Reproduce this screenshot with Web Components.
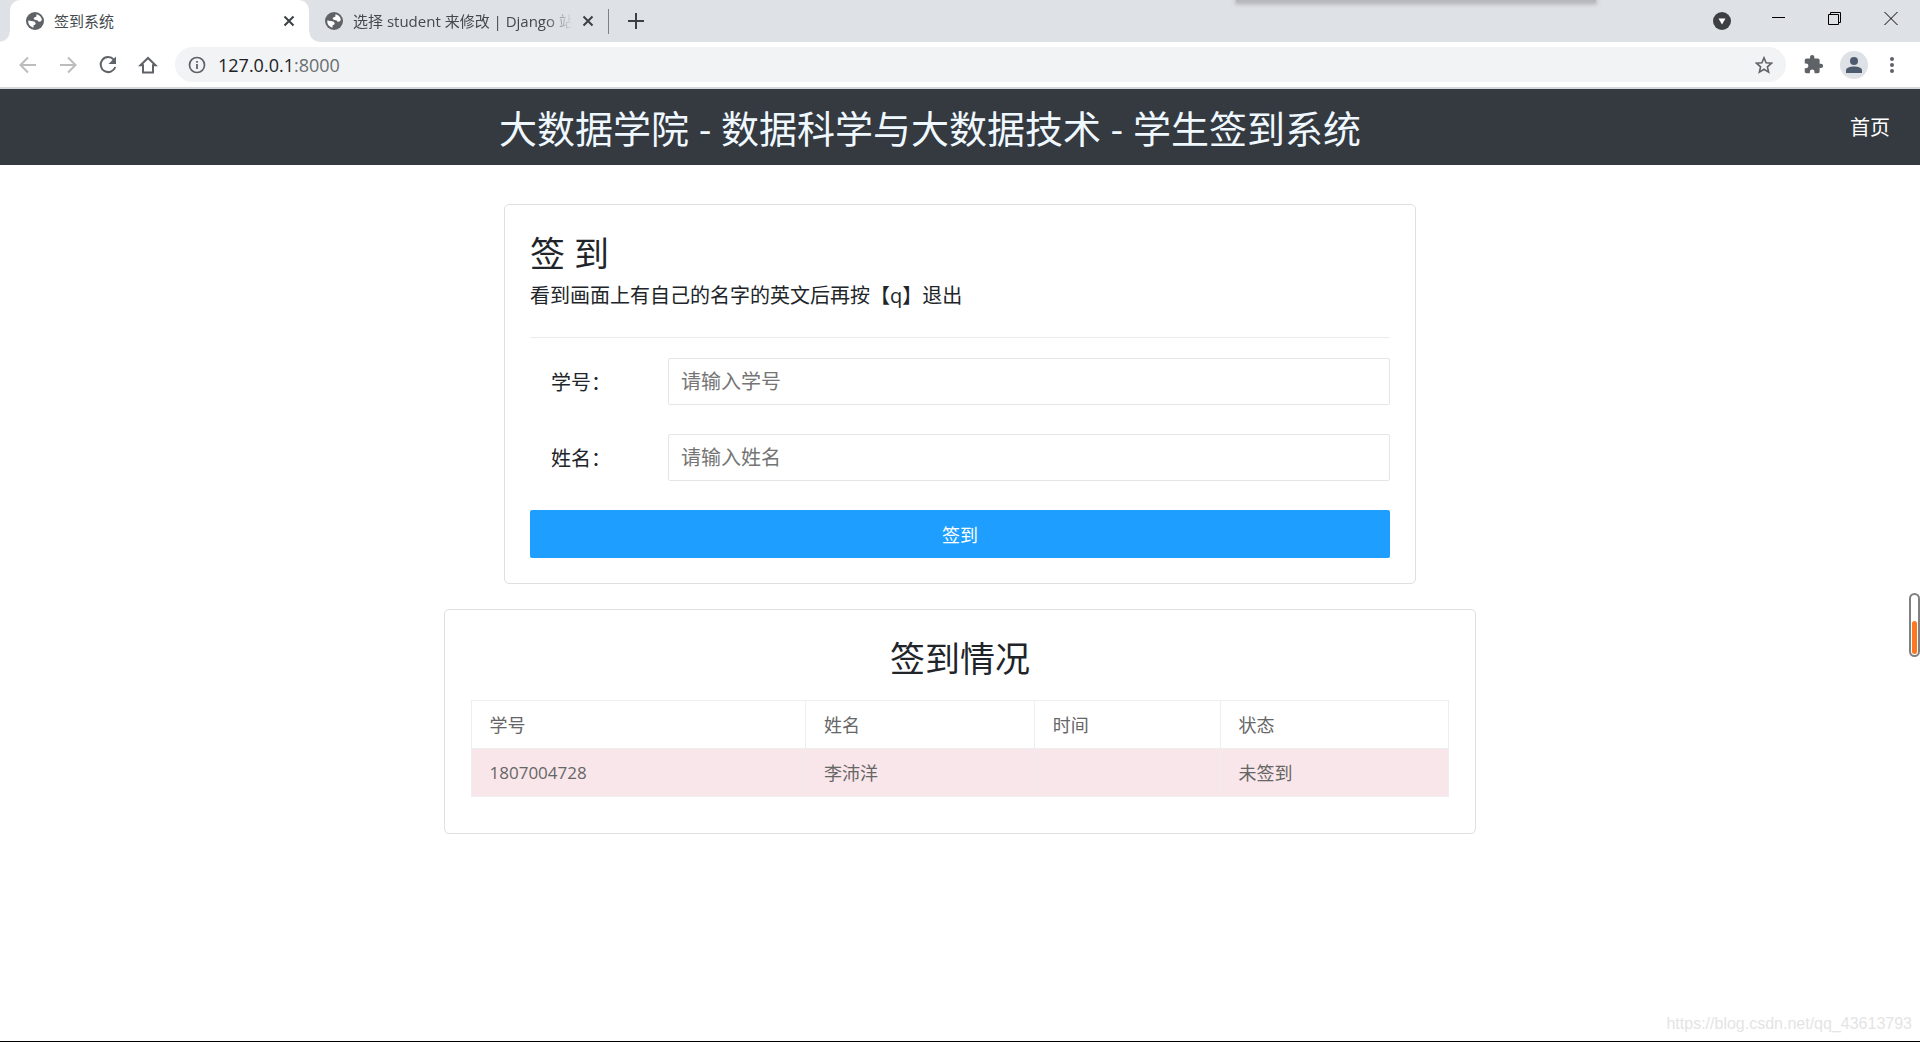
<!DOCTYPE html>
<html lang="zh-CN">
<head>
<meta charset="utf-8">
<title>签到系统</title>
<style>
html,body{height:100%}
body{margin:0;background:#fff;font-family:"Open Sans","Noto Sans CJK SC",sans-serif;color:#212529}
</style>
</head>
<body>
<browser-window></browser-window>
<script>
const define=(name,html,after)=>customElements.define(name,class extends HTMLElement{
  constructor(){
    super();
    const t=document.createElement('template');
    t.innerHTML='<style>*{box-sizing:border-box}button{font:inherit;border:0;background:none;padding:0;margin:0}svg{display:block}</style>'+html;
    this.attachShadow({mode:'open'}).append(t.content.cloneNode(true));
  }
  connectedCallback(){after&&after.call(this,this.shadowRoot)}
});

define('globe-icon',`<style>:host{display:block;width:18px;height:18px;flex:none}</style>
<svg width="18" height="18" viewBox="0 0 18 18"><circle cx="9" cy="9" r="9" fill="#5f6368"/><path d="M10.500 2.200C13.500 2.700 15.600 5 15.900 8L14.500 9.600 12.500 9.800 11.800 8.400 8.600 7.800 7.600 6.400 8.600 5.200 10.300 4.800ZM2.200 8.600 5.400 9 8.400 9.600 9.800 11.200 9 12.800 7.600 13.200 7.400 15.700A7 7 0 0 1 2.200 8.600Z" fill="#fff"/></svg>`);

define('browser-tab',`<style>
:host{display:flex;align-items:center;height:42px;padding:0 14px 0 16px;gap:10px;font-size:15px;line-height:20px;color:#45494d;min-width:0;flex:0 1 299px;position:relative}
:host([active]){background:#fff;border-radius:10px 10px 0 0}
:host([active])::before,:host([active])::after{content:"";position:absolute;bottom:0;width:10px;height:10px}
:host([active])::before{right:100%;background:radial-gradient(circle at 0 0,transparent 9px,#fff 10px)}
:host([active])::after{left:100%;background:radial-gradient(circle at 100% 0,transparent 9px,#fff 10px)}
.name{flex:1;min-width:0;white-space:nowrap;overflow:hidden}
:host([fade]) .name{-webkit-mask-image:linear-gradient(90deg,#000 88%,transparent);mask-image:linear-gradient(90deg,#000 88%,transparent)}
</style><globe-icon></globe-icon><span class="name"><slot></slot></span>
<button aria-label="关闭标签页"><svg width="12" height="12" viewBox="0 0 12 12"><path d="M1.500 1.500 10.500 10.500M10.500 1.500 1.500 10.500" stroke="#3c4043" stroke-width="2" fill="none"/></svg></button>`);

define('tab-strip',`<style>
:host{display:flex;align-items:center;height:42px;background:#dee1e6;padding-left:10px;position:relative}
.sep{width:1px;height:25px;background:#7d8185}
.new{margin-left:19px}
.shade{position:absolute;left:64.400%;width:18.700%;top:0;height:2px;background:#b5b8bd;box-shadow:0 1px 4px 1px #a6a9ae}
.win{margin-left:auto;display:flex;align-items:center;gap:41px;padding-right:22px}
</style>
<browser-tab active>签到系统</browser-tab><browser-tab fade>选择 student 来修改 | Django 站点管理员</browser-tab><i class="sep"></i>
<button class="new" aria-label="新标签页"><svg width="16" height="16" viewBox="0 0 16 16"><path d="M8 0V16M0 8H16" stroke="#3c4043" stroke-width="2"/></svg></button>
<i class="shade"></i>
<div class="win">
<button aria-label="搜索标签页"><svg width="18" height="42" viewBox="0 0 18 42"><circle cx="9" cy="21" r="9" fill="#3c4043"/><path d="M5.500 18.500H12.500L9 24.500Z" fill="#fff"/></svg></button>
<button aria-label="最小化"><svg width="14" height="42" viewBox="0 0 14 42"><path d="M0 17.500H13" stroke="#000"/></svg></button>
<button aria-label="还原"><svg width="16" height="42" viewBox="0 0 16 42"><path d="M1.500 14.500H11.500V24.500H1.500ZM3.500 14V12.500H13.500V22.500H12" fill="none" stroke="#000"/></svg></button>
<button aria-label="关闭"><svg width="14" height="42" viewBox="0 0 14 42"><path d="M.5 12 13.500 25M13.500 12 .5 25" stroke="#000" fill="none"/></svg></button>
</div>`);

define('address-bar',`<style>
:host{display:flex;align-items:center;height:45px;padding:0 20px 0 18px;background:#fff}
.nav{display:flex;gap:20px;margin-right:17px}
label{flex:1;min-width:0;height:35px;border-radius:18px;background:#f1f3f4;display:flex;align-items:center;padding:0 13px;font-size:18px;line-height:24px;color:#202124}
.url{flex:1;margin-left:12px}
.port{color:#6a6e72}
.tools{display:flex;align-items:center;gap:16px;margin-left:17px}
</style>
<div class="nav">
<button aria-label="后退"><svg width="20" height="20" viewBox="0 0 20 20"><path d="M18 10H3M10 2.500 2.500 10 10 17.500" fill="none" stroke="#babcbe" stroke-width="2"/></svg></button>
<button aria-label="前进"><svg width="20" height="20" viewBox="0 0 20 20"><path d="M2 10H17M10 2.500 17.500 10 10 17.500" fill="none" stroke="#babcbe" stroke-width="2"/></svg></button>
<button aria-label="重新加载"><svg width="20" height="20" viewBox="0 0 20 20"><path d="M15.800 4.600A7.500 7.500 0 1 0 17.300 12" fill="none" stroke="#5f6368" stroke-width="2"/><path d="M18 1.500V9H10.500Z" fill="#5f6368"/></svg></button>
<button aria-label="主页"><svg width="20" height="20" viewBox="0 0 20 20"><path d="M2.500 10.300 10 3 17.500 10.300H15V17.500H5V10.300Z" fill="none" stroke="#5f6368" stroke-width="2"/></svg></button>
</div>
<label><svg width="18" height="18" viewBox="0 0 18 18"><circle cx="9" cy="9" r="7.500" fill="none" stroke="#5f6368" stroke-width="1.700"/><path d="M9 8V13M9 5V6.800" stroke="#5f6368" stroke-width="1.800"/></svg>
<span class="url">127.0.0.1<span class="port">:8000</span></span>
<svg width="18" height="18" viewBox="0 0 18 18"><path d="M9 1.800 11.100 6.700 16.500 7.200 12.400 10.800 13.600 16.100 9 13.300 4.400 16.100 5.600 10.800 1.500 7.200 6.900 6.700Z" fill="none" stroke="#5f6368" stroke-width="1.600"/></svg></label>
<div class="tools">
<button aria-label="扩展程序"><svg width="21" height="21" viewBox="0 0 24 24"><path d="M20.500 11H19V7c0-1.100-.9-2-2-2h-4V3.500a2.500 2.500 0 0 0-5 0V5H4c-1.100 0-2 .9-2 2v3.800h1.500a2.700 2.700 0 0 1 0 5.400H2V20c0 1.100.9 2 2 2h3.800v-1.500a2.700 2.700 0 0 1 5.400 0V22H17c1.100 0 2-.9 2-2v-4h1.500a2.500 2.500 0 0 0 0-5z" fill="#5f6368"/></svg></button>
<button aria-label="个人资料"><svg width="28" height="28" viewBox="0 0 28 28"><circle cx="14" cy="14" r="14" fill="#dee1e6"/><circle cx="14" cy="10" r="4" fill="#4d5b6e"/><path d="M6 22V19.500C6 16.500 10 15.500 14 15.500S22 16.500 22 19.500V22Z" fill="#4d5b6e"/></svg></button>
<button aria-label="菜单"><svg width="16" height="20" viewBox="0 0 16 20"><g fill="#5f6368"><circle cx="8" cy="4" r="2"/><circle cx="8" cy="10" r="2"/><circle cx="8" cy="16" r="2"/></g></svg></button>
</div>`);

define('site-header',`<style>
:host{display:grid;grid-template-columns:1fr auto 1fr;align-items:center;height:76px;background:#343a40;padding:2px 30px 0}
h1{grid-column:2;margin:0 60px 0 0;font-size:38px;font-weight:400;line-height:48px;color:#f0f8ff;white-space:nowrap}
a{grid-column:3;justify-self:end;color:#fff;text-decoration:none;font-size:20px;line-height:30px}
</style><h1><slot></slot></h1><a href="#">首页</a>`);

define('panel-card',`<style>
:host{display:block;border:1px solid #dfdfdf;border-radius:5px;background:#fff;padding:26px 25px 25px}
</style><slot></slot>`);

define('form-row',`<style>
:host{display:flex;margin-bottom:29px;font-size:20px}
label{width:138px;padding:10px 0 7px 21px;line-height:30px;color:#212529}
input{flex:1;min-width:0;height:47px;border:1px solid #e6e6e6;border-radius:2px;padding:0 12px;font:inherit;background:#fff}
input::placeholder{color:#757575;opacity:1}
</style><label for="f"></label><input id="f" type="text">`,function(r){
  r.querySelector('label').textContent=this.getAttribute('label');
  r.querySelector('input').placeholder=this.getAttribute('hint');
});

define('sign-form',`<style>
:host{display:block}
h2{margin:0;font-size:35px;font-weight:400;line-height:46px}
p{margin:0;font-size:20px;line-height:38px}
hr{border:0;border-top:1px solid #ebebeb;margin:22px 0 20px}
form{margin:0}
.go{display:block;width:100%;height:48px;border-radius:2px;background:#1e9fff;color:#fff;font-size:18px}
</style><h2>签 到</h2><p>看到画面上有自己的名字的英文后再按【q】退出</p><hr>
<form><form-row label="学号：" hint="请输入学号"></form-row><form-row label="姓名：" hint="请输入姓名"></form-row>
<button class="go" type="button">签到</button></form>`);

define('sign-table',`<style>
:host{display:block}
h2{margin:0 0 18px;font-size:35px;font-weight:400;line-height:46px;text-align:center}
table{width:100%;border-collapse:collapse;table-layout:fixed;font-size:18px;line-height:24px;color:#666}
th,td{height:48px;border:1px solid #eee;padding:0 18px;text-align:left;font-weight:400}
.num{font-size:17px}
tbody tr{background:#f9e6ea}
</style><h2>签到情况</h2>
<table><colgroup><col style="width:34.200%"><col style="width:23.400%"><col style="width:19%"><col></colgroup>
<thead><tr><th>学号</th><th>姓名</th><th>时间</th><th>状态</th></tr></thead>
<tbody><tr><td class="num">1807004728</td><td>李沛洋</td><td></td><td>未签到</td></tr></tbody></table>`);

define('browser-window',`<style>
:host{display:flex;flex-direction:column;min-height:100%;border-bottom:1px solid #000;box-sizing:border-box}
.line{height:2px;background:#d5d7da}
main{flex:1;display:flex;flex-direction:column;align-items:center;gap:25px;padding-top:39px;background:#fff}
.form{width:47.500%}
.list{width:53.800%;padding:26px 26px 36px}
.meter{position:fixed;right:0;top:593px;width:11px;height:64px;border:2px solid #808080;border-radius:6px;background:#fff;display:flex;align-items:flex-end;padding:1px}
.meter i{width:100%;height:33px;border-radius:3px;background:#ff7721}
footer{align-self:flex-end;padding:0 8px 7px 0;font:16px/20px "Liberation Sans",Arial,sans-serif;color:#e4e4e4}
</style>
<tab-strip></tab-strip><address-bar></address-bar><div class="line"></div>
<site-header>大数据学院 - 数据科学与大数据技术 - 学生签到系统</site-header>
<main><panel-card class="form"><sign-form></sign-form></panel-card>
<panel-card class="list"><sign-table></sign-table></panel-card></main>
<footer>https://blog.csdn.net/qq_43613793</footer>
<div class="meter"><i></i></div>`);
</script>
</body>
</html>
